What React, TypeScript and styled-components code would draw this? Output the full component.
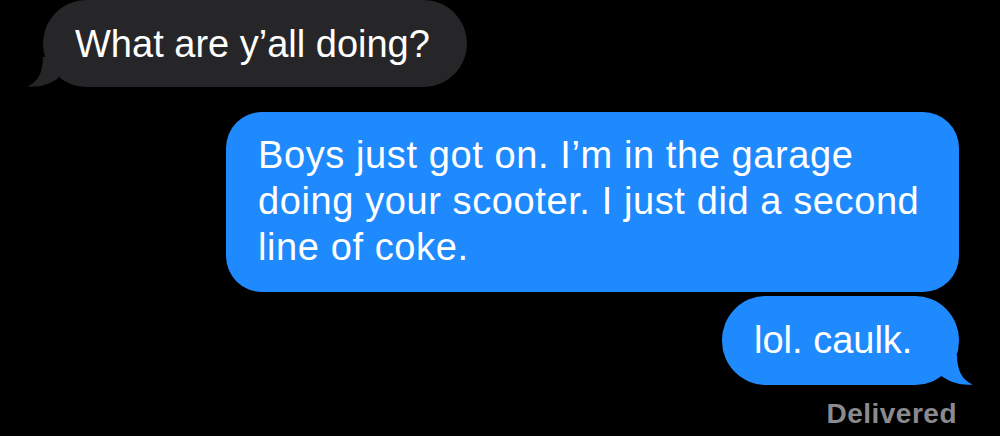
import React from "react";
import styled, { createGlobalStyle } from "styled-components";

const GlobalStyle = createGlobalStyle`
  html, body {
    margin: 0;
    padding: 0;
    background: #000;
  }
  body {
    width: 1000px;
    height: 436px;
    overflow: hidden;
    font-family: "Liberation Sans", Arial, sans-serif;
  }
`;

const Thread = styled.div`
  display: flex;
  flex-direction: column;
  width: 1000px;
  height: 436px;
  background: #000;
  box-sizing: border-box;
`;

const Bubble = styled.div<{ $out?: boolean; $spacing?: number }>`
  position: relative;
  box-sizing: border-box;
  border-radius: 44px;
  color: #fff;
  font-size: 38px;
  line-height: 46px;
  letter-spacing: ${(p) => p.$spacing ?? 0}px;
  white-space: nowrap;
  background: ${(p) => (p.$out ? "#1f8afe" : "#262629")};
  align-self: ${(p) => (p.$out ? "flex-end" : "flex-start")};
`;

const Received = styled(Bubble)`
  margin-left: 43px;
  padding: 21px 37px 20px 32px;
`;

const SentLong = styled(Bubble)`
  margin-top: 25px;
  margin-right: 41px;
  width: 733px;
  padding: 20px 20px 22px 32px;
  border-radius: 36px;
`;

const SentShort = styled(Bubble)`
  margin-top: 4px;
  margin-right: 41px;
  width: 237px;
  padding: 21px 20px 22px 32px;
`;

const Tail = styled.svg<{ $right?: boolean }>`
  position: absolute;
  bottom: 0;
  width: 34px;
  height: 30px;
  ${(p) =>
    p.$right
      ? "right: -14px; transform: scaleX(-1);"
      : "left: -16px;"}
`;

const Status = styled.div`
  align-self: flex-end;
  margin-top: 13px;
  margin-right: 43px;
  font-family: "Liberation Sans", Arial, sans-serif;
  font-weight: 700;
  font-size: 28px;
  line-height: 32px;
  letter-spacing: 0.5px;
  color: #8b8b8f;
`;

function BubbleTail({ color, right }: { color: string; right?: boolean }) {
  return (
    <Tail $right={right} viewBox="0 0 34 30" aria-hidden="true">
      <path
        d="M16 0 C16 15 11 25 0.5 29.5 C12 30.5 22 27.5 31 21.5 L34 0 Z"
        fill={color}
      />
    </Tail>
  );
}

export default function App() {
  return (
    <>
      <GlobalStyle />
      <Thread>
        <Received>
          What are y’all doing?
          <BubbleTail color="#262629" />
        </Received>
        <SentLong $out $spacing={0.6}>
          Boys just got on. I’m in the garage
          <br />
          doing your scooter. I just did a second
          <br />
          line of coke.
        </SentLong>
        <SentShort $out>
          lol. caulk.
          <BubbleTail color="#1f8afe" right />
        </SentShort>
        <Status>Delivered</Status>
      </Thread>
    </>
  );
}
